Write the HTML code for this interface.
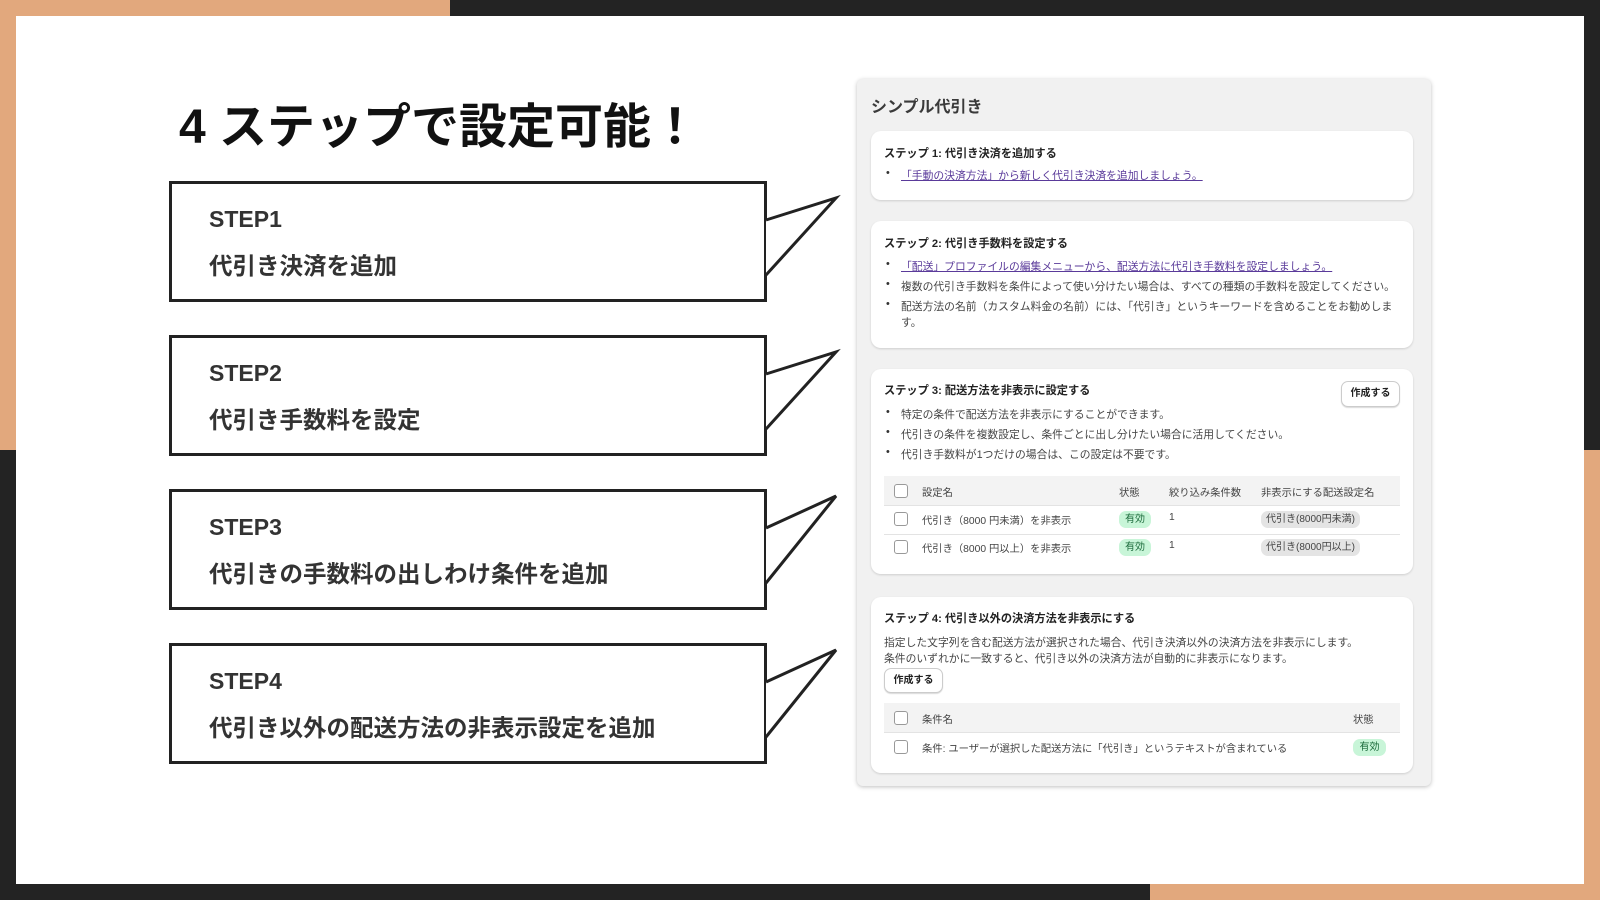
<!DOCTYPE html>
<html><head><meta charset="utf-8">
<style>
*{margin:0;padding:0;box-sizing:border-box}
body{width:1600px;height:900px;position:relative;overflow:hidden;background:#fff;font-family:"Liberation Sans","Noto Sans CJK JP",sans-serif;color:#222}
.a{position:absolute}
.box{position:absolute;left:169px;width:598px;height:121px;border:3px solid #222;background:#fff}
.box .s{position:absolute;left:37px;top:22px;font-size:23px;font-weight:700;color:#333}
.box .t{position:absolute;left:37px;top:63px;font-size:23.5px;font-weight:700;color:#333}
.panel{position:absolute;left:857px;top:79px;width:574px;height:707px;background:#f1f1f1;border-radius:6px;box-shadow:0 1px 4px rgba(0,0,0,.25)}
.card{position:absolute;left:14px;width:542px;background:#fff;border-radius:10px;box-shadow:0 1px 2px rgba(0,0,0,.15);font-size:10.8px;color:#444}
.card .h{position:absolute;left:13px;font-weight:700;font-size:11.2px;color:#222}
.card .l{position:absolute;left:16px;white-space:nowrap}
.card .l:before{content:"•";position:absolute;left:-1px;color:#333}
.card .l span{margin-left:14px}
.lk{color:#5a3a9a;text-decoration:underline}
.btn{position:absolute;border:1px solid #ccc;border-radius:7px;font-weight:700;font-size:10px;color:#222;text-align:center;box-shadow:0 1px 1px rgba(0,0,0,.15);background:#fff}
.th{position:absolute;left:13px;width:516px;background:#f3f3f3;border-bottom:1px solid #e3e3e3}
.cb{position:absolute;width:14px;height:14px;border:1px solid #999;border-radius:3px;background:#fff}
.c{position:absolute;white-space:nowrap;font-size:10.3px;color:#444}
.g{position:absolute;background:#c8f5d8;color:#1a6a3a;border-radius:7px;font-size:10px;text-align:center;height:17px;line-height:17px}
.gr{position:absolute;background:#e4e4e4;color:#444;border-radius:7px;font-size:10px;padding:0 5px;height:17px;line-height:17px}
</style></head><body>
<div class="a" style="left:0;top:0;width:450px;height:16px;background:#e2a87d"></div>
<div class="a" style="left:450px;top:0;width:1150px;height:16px;background:#232323"></div>
<div class="a" style="left:0;top:0;width:16px;height:450px;background:#e2a87d"></div>
<div class="a" style="left:0;top:450px;width:16px;height:450px;background:#232323"></div>
<div class="a" style="left:1584px;top:0;width:16px;height:450px;background:#232323"></div>
<div class="a" style="left:1584px;top:450px;width:16px;height:450px;background:#e2a87d"></div>
<div class="a" style="left:0;top:884px;width:1150px;height:16px;background:#232323"></div>
<div class="a" style="left:1150px;top:884px;width:450px;height:16px;background:#e2a87d"></div>

<div class="a" style="left:179px;top:87px;font-size:48px;font-weight:700;color:#111;white-space:nowrap">4 ステップで設定可能！</div>

<div class="box" style="top:181px"><div class="s">STEP1</div><div class="t">代引き決済を追加</div></div>
<div class="box" style="top:335px"><div class="s">STEP2</div><div class="t">代引き手数料を設定</div></div>
<div class="box" style="top:489px"><div class="s">STEP3</div><div class="t">代引きの手数料の出しわけ条件を追加</div></div>
<div class="box" style="top:643px"><div class="s">STEP4</div><div class="t">代引き以外の配送方法の非表示設定を追加</div></div>
<svg class="a" style="left:0;top:0" width="1600" height="900">
<g fill="#fff" stroke="#222" stroke-width="3" stroke-linejoin="miter">
<polyline points="766,220 836,198 766,275"/>
<polyline points="766,374 836,352 766,429"/>
<polyline points="766,528 836,496 766,583"/>
<polyline points="766,682 836,650 766,737"/>
</g></svg>

<div class="panel">
<div class="a" style="left:14px;top:14px;font-size:16px;font-weight:700;color:#3a3a3a">シンプル代引き</div>

<div class="card" style="top:52px;height:69px">
<div class="h" style="top:14px">ステップ 1: 代引き決済を追加する</div>
<div class="l" style="top:36px"><span class="lk">「手動の決済方法」から新しく代引き決済を追加しましょう。</span></div>
</div>

<div class="card" style="top:142px;height:127px">
<div class="h" style="top:14px">ステップ 2: 代引き手数料を設定する</div>
<div class="l" style="top:37px"><span class="lk">「配送」プロファイルの編集メニューから、配送方法に代引き手数料を設定しましょう。</span></div>
<div class="l" style="top:57px"><span>複数の代引き手数料を条件によって使い分けたい場合は、すべての種類の手数料を設定してください。</span></div>
<div class="l" style="top:77px"><span>配送方法の名前（カスタム料金の名前）には、「代引き」というキーワードを含めることをお勧めしま</span></div>
<div class="a" style="left:30px;top:93px">す。</div>
</div>

<div class="card" style="top:290px;height:205px">
<div class="h" style="top:13px">ステップ 3: 配送方法を非表示に設定する</div>
<div class="btn" style="left:470px;top:12px;width:59px;height:26px;line-height:24px">作成する</div>
<div class="l" style="top:37px"><span>特定の条件で配送方法を非表示にすることができます。</span></div>
<div class="l" style="top:57px"><span>代引きの条件を複数設定し、条件ごとに出し分けたい場合に活用してください。</span></div>
<div class="l" style="top:77px"><span>代引き手数料が1つだけの場合は、この設定は不要です。</span></div>
<div class="th" style="top:107px;height:30px"></div>
<div class="cb" style="left:23px;top:115px"></div>
<div class="c" style="left:51px;top:115px">設定名</div>
<div class="c" style="left:248px;top:115px">状態</div>
<div class="c" style="left:298px;top:115px">絞り込み条件数</div>
<div class="c" style="left:390px;top:115px">非表示にする配送設定名</div>
<div class="cb" style="left:23px;top:143px"></div>
<div class="c" style="left:51px;top:143px">代引き（8000 円未満）を非表示</div>
<div class="g" style="left:248px;top:142px;width:32px">有効</div>
<div class="c" style="left:298px;top:143px">1</div>
<div class="gr" style="left:390px;top:142px">代引き(8000円未満)</div>
<div class="a" style="left:13px;top:165px;width:516px;height:1px;background:#e3e3e3"></div>
<div class="cb" style="left:23px;top:171px"></div>
<div class="c" style="left:51px;top:171px">代引き（8000 円以上）を非表示</div>
<div class="g" style="left:248px;top:170px;width:32px">有効</div>
<div class="c" style="left:298px;top:171px">1</div>
<div class="gr" style="left:390px;top:170px">代引き(8000円以上)</div>
</div>

<div class="card" style="top:518px;height:176px">
<div class="h" style="top:13px">ステップ 4: 代引き以外の決済方法を非表示にする</div>
<div class="a" style="left:13px;top:37px">指定した文字列を含む配送方法が選択された場合、代引き決済以外の決済方法を非表示にします。</div>
<div class="a" style="left:13px;top:53px">条件のいずれかに一致すると、代引き以外の決済方法が自動的に非表示になります。</div>
<div class="btn" style="left:13px;top:71px;width:59px;height:25px;line-height:23px">作成する</div>
<div class="th" style="top:106px;height:30px"></div>
<div class="cb" style="left:23px;top:114px"></div>
<div class="c" style="left:51px;top:114px">条件名</div>
<div class="c" style="left:482px;top:114px">状態</div>
<div class="cb" style="left:23px;top:143px"></div>
<div class="c" style="left:51px;top:143px">条件: ユーザーが選択した配送方法に「代引き」というテキストが含まれている</div>
<div class="g" style="left:482px;top:142px;width:33px">有効</div>
</div>
</div>
</body></html>
